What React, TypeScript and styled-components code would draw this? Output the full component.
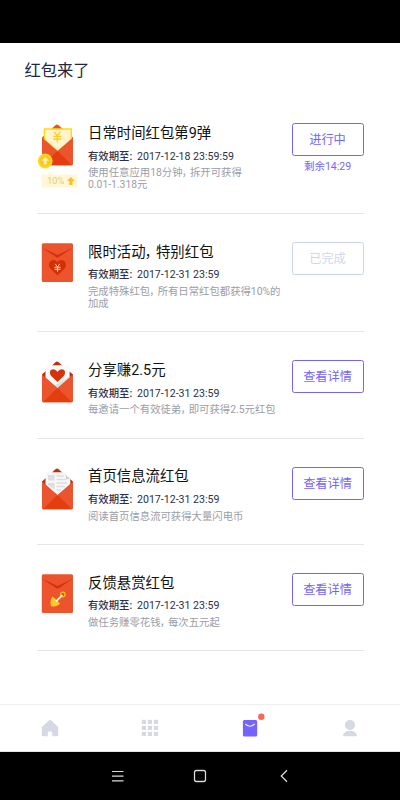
import React from 'react';
import styled, { createGlobalStyle, css } from 'styled-components';

const Global = createGlobalStyle`
  * { box-sizing: border-box; }
  body { margin: 0; background: #fff; }
`;

const Screen = styled.div`
  width: 400px;
  height: 800px;
  display: flex;
  flex-direction: column;
  overflow: hidden;
  background: #fff;
  font-family: Roboto, 'Noto Sans CJK SC', sans-serif;
`;

const StatusBar = styled.div`
  flex: none;
  height: 43px;
  background: #000;
`;

const Header = styled.h1`
  flex: none;
  height: 52.2px;
  margin: 0;
  padding: 16px 0 0 24.5px;
  font-size: 16.3px;
  font-weight: 400;
  line-height: 24px;
  color: #22263f;
`;

const List = styled.main`
  flex: 1;
  min-height: 0;
  padding: 0 36.5px;
`;

const Row = styled.section<{ $tall: boolean }>`
  display: flex;
  align-items: flex-start;
  height: ${(p) => (p.$tall ? 118.6 : 106.3)}px;
  padding-top: 28.1px;
  border-bottom: 1px solid #e6e6e8;
`;

const Picture = styled.svg`
  flex: none;
  display: block;
  width: 42px;
  height: 66px;
  overflow: visible;
`;

const Info = styled.div`
  flex: none;
  width: 213px;
  padding: 1.7px 0 0 9.5px;
  white-space: nowrap;
`;

const Title = styled.h2`
  margin: 0;
  font-size: 14.4px;
  font-weight: 400;
  line-height: 18px;
  color: #111;
`;

const Expiry = styled.p`
  display: flex;
  margin: 6.6px 0 0;
  font-size: 10.35px;
  font-weight: 500;
  line-height: 14px;
  color: #2c3049;
`;

const ExpiryLabel = styled.span`
  flex: none;
  width: 49px;
`;

const ExpiryTime = styled.time`
  font-size: 10.6px;
  font-weight: 400;
`;

const Description = styled.p`
  margin: 3.6px 0 0;
  font-size: 10.37px;
  line-height: 12.3px;
  color: #9b9da8;
`;

const Comma = styled.span`
  font-feature-settings: 'halt';
  margin-left: -0.08em;
  padding-right: 0.3em;
`;

const Action = styled.div`
  flex: none;
  width: 72px;
  display: flex;
  flex-direction: column;
  align-items: center;
`;

type Tone = 'active' | 'done';

const Button = styled.button<{ $tone: Tone }>`
  width: 72px;
  height: 33px;
  padding: 1px 0 0;
  border: 1.5px solid #7565fb;
  border-radius: 2.5px;
  background: #fff;
  color: #7565fb;
  font-family: inherit;
  font-size: 12.2px;
  line-height: 18px;
  ${(p) =>
    p.$tone === 'done' &&
    css`
      border-color: #cbd3ec;
      color: #d0d7ec;
    `}
`;

const Remaining = styled.span`
  margin-top: 4px;
  font-size: 10.5px;
  line-height: 14px;
  color: #7565fb;
`;

const TabBar = styled.nav`
  flex: none;
  height: 48px;
  display: grid;
  grid-template-columns: repeat(4, 1fr);
  align-items: center;
  border-top: 1px solid #eeeef0;
  border-bottom: 1px solid #dfe5e3;
`;

const Tab = styled.a`
  display: flex;
  justify-content: center;
  svg { display: block; overflow: visible; }
`;

const SystemBar = styled.div`
  flex: none;
  height: 48px;
  display: flex;
  align-items: center;
  justify-content: center;
  gap: 62px;
  background: #000;
`;

const OpenBase = ({ children, back = '#b83210' }: { children: React.ReactNode; back?: string }) => (
  <>
    <path d="M5 16V14.5L18.5 2.2Q20 1 21.500 2.200L36 14.500V16L36 30H5Z" fill={back} />
    {children}
    <path d="M5 14.500L20.500 28 36 14.500V41Q36 42.300 34.700 42.300H6.300Q5 42.300 5 41Z" fill="#eb542d" />
    <path d="M6 42.200L19.300 29Q20.500 28 21.700 29L35 42.200Z" fill="#e33d10" />
  </>
);

const ClosedBase = ({ children }: { children: React.ReactNode }) => (
  <>
    <rect x="4.800" y="1.300" width="31.200" height="38.800" rx="1.500" fill="#eb542d" />
    <path d="M4.800 5.500L20.500 13 36 5.500 22 15Q20.500 16 19 15Z" fill="#d83008" />
    {children}
  </>
);

const Yen = ({ x, y, s, color }: { x: number; y: number; s: number; color: string }) => (
  <path
    transform={`translate(${x} ${y}) scale(${s})`}
    d="M-3-5L0-.8 3-5M-4-.5H4M-4 2.200H4M0-.8V5.500"
    fill="none"
    stroke={color}
    strokeWidth="1.300"
  />
);

const pictures: Record<string, React.ReactNode> = {
  daily: (
    <>
      <OpenBase back="#ea5027">
        <path d="M7.500 6H34.300V17L21 28.500 7.500 17Z" fill="#fff4cd" stroke="#ffdc08" strokeWidth="1.500" />
        <Yen x={20.300} y={13.800} s={1} color="#fdcc25" />
      </OpenBase>
      <circle cx="8.200" cy="38" r="7.400" fill="#ffda22" />
      <circle cx="8.200" cy="38" r="5.500" fill="#fdc51d" />
      <path d="M8.200 34L12 37.800H9.700V41.500H6.700V37.800H4.400Z" fill="#fff2a8" />
      <path d="M13 49L16 51.500H40.500V64.500H4.500V51.500H11Z" fill="#fff7d6" />
      <text x="10.200" y="61.300" fontSize="9.200" fill="#efc765">10%</text>
      <path d="M33.900 54L37.800 58H35.500V62H32.300V58H30Z" fill="#f9c02a" />
    </>
  ),
  special: (
    <ClosedBase>
      <path d="M20.500 33.500L13.300 26.500C9 20.500 16.500 14.500 20.500 20.200 24.500 14.500 32 20.500 27.700 26.500Z" fill="#d52f06" />
      <Yen x={20.500} y={25.600} s={0.75} color="#ffdcc0" />
    </ClosedBase>
  ),
  share: (
    <OpenBase>
      <path d="M8.500 6Q8.500 5.200 9.300 5.200H31.700Q32.600 5.200 32.600 6V18L20.500 28.500 8.500 18Z" fill="#fafafa" />
      <path d="M32.600 16V18L20.500 28.500 17 25.500 23 22.500Z" fill="#dedede" />
      <path d="M20.500 22L14.200 16C10 10 17 6.500 20.500 12 24 6.500 31 10 26.800 16Z" fill="#d83208" />
    </OpenBase>
  ),
  feed: (
    <OpenBase>
      <path d="M8.500 6Q8.500 5.200 9.300 5.200H28.500V8.500H31L33.300 11V18L20.500 28.500 8.500 18Z" fill="#f7f7f7" />
      <path d="M29 8.500L33.300 12H29Z" fill="#c9cccd" />
      <path d="M11 8H17.500V13.500H11ZM11 16H17.500V22.500L11 18Z" fill="#dcdedf" />
      <path d="M19.500 9H27M19.500 12.500H29.500M19.500 16H30.500M19.500 19.500H28M19.500 23H24" stroke="#dcdedf" strokeWidth="1.300" />
    </OpenBase>
  ),
  feedback: (
    <ClosedBase>
      <circle cx="25.800" cy="21.500" r="2.300" fill="none" stroke="#f9bb20" strokeWidth="1.300" />
      <path d="M15.500 23.500L18 25.500 21 28.500 23 30.500C21 33 18 34 14 33.200 13 30 13.500 26 15.500 23.500Z" fill="#ffc928" />
      <path d="M19 28.500L25.300 22.200" stroke="#fff3dc" strokeWidth="1.800" />
    </ClosedBase>
  ),
};

interface Packet {
  id: string;
  title: string;
  expiry: string;
  lines: string[];
  action: string;
  tone?: Tone;
  remaining?: string;
}

const packets: Packet[] = [
  { id: 'daily', title: '日常时间红包第9弹', expiry: '2017-12-18 23:59:59', lines: ['使用任意应用18分钟，拆开可获得', '0.01-1.318元'], action: '进行中', remaining: '剩余14:29' },
  { id: 'special', title: '限时活动，特别红包', expiry: '2017-12-31 23:59', lines: ['完成特殊红包，所有日常红包都获得10%的', '加成'], action: '已完成', tone: 'done' },
  { id: 'share', title: '分享赚2.5元', expiry: '2017-12-31 23:59', lines: ['每邀请一个有效徒弟，即可获得2.5元红包'], action: '查看详情' },
  { id: 'feed', title: '首页信息流红包', expiry: '2017-12-31 23:59', lines: ['阅读首页信息流可获得大量闪电币'], action: '查看详情' },
  { id: 'feedback', title: '反馈悬赏红包', expiry: '2017-12-31 23:59', lines: ['做任务赚零花钱，每次五元起'], action: '查看详情' },
];

const Phrase = ({ text }: { text: string }) => (
  <>
    {text.split('，').map((part, i) => (
      <React.Fragment key={i}>
        {i > 0 && <Comma>，</Comma>}
        {part}
      </React.Fragment>
    ))}
  </>
);

export default function App() {
  return (
    <Screen>
      <Global />
      <StatusBar />
      <Header>红包来了</Header>
      <List>
        {packets.map((p) => (
          <Row key={p.id} $tall={p.lines.length > 1}>
            <Picture viewBox="0 0 42 66">{pictures[p.id]}</Picture>
            <Info>
              <Title><Phrase text={p.title} /></Title>
              <Expiry>
                <ExpiryLabel>有效期至:</ExpiryLabel>
                <ExpiryTime>{p.expiry}</ExpiryTime>
              </Expiry>
              <Description>
                {p.lines.map((line, i) => (
                  <React.Fragment key={line}>
                    {i > 0 && <br />}
                    <Phrase text={line} />
                  </React.Fragment>
                ))}
              </Description>
            </Info>
            <Action>
              <Button $tone={p.tone ?? 'active'}>{p.action}</Button>
              {p.remaining && <Remaining>{p.remaining}</Remaining>}
            </Action>
          </Row>
        ))}
      </List>
      <TabBar>
        <Tab>
          <svg width="18" height="18" fill="#d6d9e2">
            <path d="M9 1Q9.600 1 10.200 1.600L17.200 8V16Q17.200 17.300 16 17.300H11.200V14Q11.200 12.300 9 12.300T6.800 14V17.300H2Q.8 17.300 .8 16V8L7.800 1.600Q8.400 1 9 1Z" />
          </svg>
        </Tab>
        <Tab>
          <svg width="18" height="18" fill="#d6d9e2">
            {[0.8, 6.8, 12.8].map((y) => [0.8, 6.8, 12.8].map((x) => <rect key={`${x}-${y}`} x={x} y={y} width="4.200" height="4.200" />))}
          </svg>
        </Tab>
        <Tab>
          <svg width="18" height="18">
            <rect x="1.900" y="1" width="14.300" height="16.400" rx="1.500" fill="#7463fd" />
            <path d="M4.300 5Q9 9.500 13.700 5" fill="none" stroke="#eeeaff" strokeWidth="1.100" />
            <circle cx="20.300" cy="-2.200" r="3.200" fill="#ff6650" />
          </svg>
        </Tab>
        <Tab>
          <svg width="18" height="18" fill="#d6d9e2">
            <circle cx="9" cy="6" r="5.100" />
            <path d="M1.900 17.300Q2.500 11.800 9 11.800T16.100 17.300Z" />
          </svg>
        </Tab>
      </TabBar>
      <SystemBar>
        <svg width="20" height="20" stroke="#d9d9d9" strokeWidth="1.200"><path d="M4 5.500H15.500M4 10.200H15.500M4 14.900H15.500" /></svg>
        <svg width="20" height="20" fill="none" stroke="#d9d9d9" strokeWidth="1.300"><rect x="4.500" y="4.500" width="11" height="11" rx="2" /></svg>
        <svg width="20" height="20" fill="none" stroke="#d9d9d9" strokeWidth="1.300"><path d="M15 4.300L9.300 10 15 15.700" /></svg>
      </SystemBar>
    </Screen>
  );
}
